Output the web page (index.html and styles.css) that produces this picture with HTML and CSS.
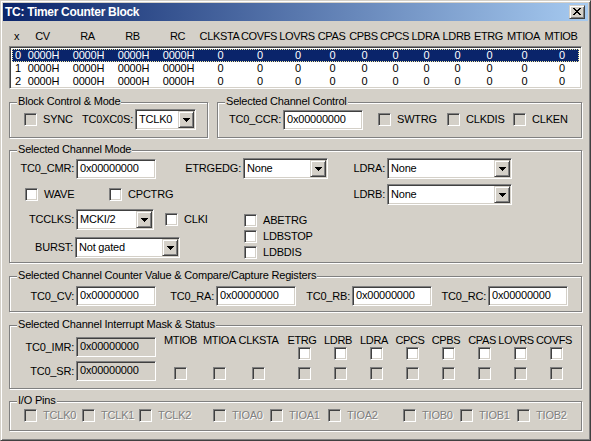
FILE: index.html
```html
<!DOCTYPE html>
<html lang="en">
<head>
    <meta charset="UTF-8">
    <title>TC: Timer Counter Block</title>
    <link rel="stylesheet" href="styles.css">
</head>
<body>
<div class="window">
    <div class="titlebar">
        <span class="title">TC: Timer Counter Block</span>
        <span class="close-btn raised">
            <svg width="8" height="7" viewBox="0 0 8 7" shape-rendering="crispEdges"><path d="M0 0h2v1H0zM6 0h2v1H6zM1 1h2v1H1zM5 1h2v1H5zM2 2h4v1H2zM3 3h2v1H3zM2 4h4v1H2zM1 5h2v1H1zM5 5h2v1H5zM0 6h2v1H0zM6 6h2v1H6z"/></svg>
        </span>
    </div>

    <div class="client">
        <!-- channel list -->
        <div class="list-head cols">
            <span>x</span><span>CV</span><span>RA</span><span>RB</span><span>RC</span>
            <span>CLKSTA</span><span>COVFS</span><span>LOVRS</span><span>CPAS</span><span>CPBS</span>
            <span>CPCS</span><span>LDRA</span><span>LDRB</span><span>ETRG</span><span>MTIOA</span><span>MTIOB</span>
        </div>
        <div class="listbox sunken">
            <div class="list-row cols selected">
                <span>0</span><span>0000H</span><span>0000H</span><span>0000H</span><span>0000H</span>
                <span>0</span><span>0</span><span>0</span><span>0</span><span>0</span>
                <span>0</span><span>0</span><span>0</span><span>0</span><span>0</span><span>0</span>
            </div>
            <div class="list-row cols">
                <span>1</span><span>0000H</span><span>0000H</span><span>0000H</span><span>0000H</span>
                <span>0</span><span>0</span><span>0</span><span>0</span><span>0</span>
                <span>0</span><span>0</span><span>0</span><span>0</span><span>0</span><span>0</span>
            </div>
            <div class="list-row cols">
                <span>2</span><span>0000H</span><span>0000H</span><span>0000H</span><span>0000H</span>
                <span>0</span><span>0</span><span>0</span><span>0</span><span>0</span>
                <span>0</span><span>0</span><span>0</span><span>0</span><span>0</span><span>0</span>
            </div>
        </div>

        <!-- block control + channel control -->
        <div class="group-row">
            <div class="group grp-block">
                <div class="group-title">Block Control &amp; Mode</div>
                <div class="row block-row">
                    <label class="check w-sync"><span class="box gray"></span>SYNC</label>
                    <span class="lbl w-xc0s">TC0XC0S:</span>
                    <div class="combo sunken w-tclk">
                        <span class="combo-text">TCLK0</span>
                        <span class="combo-btn raised"><svg width="7" height="4" shape-rendering="crispEdges"><path d="M0 0h7v1H0zM1 1h5v1H1zM2 2h3v1H2zM3 3h1v1H3z"/></svg></span>
                    </div>
                </div>
            </div>
            <div class="group grp-ccr">
                <div class="group-title">Selected Channel Control</div>
                <div class="row ccr-row">
                    <span class="lbl w-ccr">TC0_CCR:</span>
                    <div class="edit sunken">0x00000000</div>
                    <label class="check w-swtrg"><span class="box gray"></span>SWTRG</label>
                    <label class="check w-clkdis"><span class="box gray"></span>CLKDIS</label>
                    <label class="check"><span class="box gray"></span>CLKEN</label>
                </div>
            </div>
        </div>

        <!-- channel mode -->
        <div class="group grp-mode">
            <div class="group-title">Selected Channel Mode</div>
            <div class="row mode-a">
                <span class="lbl w-64">TC0_CMR:</span>
                <div class="edit sunken">0x00000000</div>
                <span class="lbl w-etrg">ETRGEDG:</span>
                <div class="combo sunken w-85">
                    <span class="combo-text">None</span>
                    <span class="combo-btn raised"><svg width="7" height="4" shape-rendering="crispEdges"><path d="M0 0h7v1H0zM1 1h5v1H1zM2 2h3v1H2zM3 3h1v1H3z"/></svg></span>
                </div>
                <span class="lbl w-ldr">LDRA:</span>
                <div class="combo sunken w-125">
                    <span class="combo-text">None</span>
                    <span class="combo-btn raised"><svg width="7" height="4" shape-rendering="crispEdges"><path d="M0 0h7v1H0zM1 1h5v1H1zM2 2h3v1H2zM3 3h1v1H3z"/></svg></span>
                </div>
            </div>
            <div class="row mode-b">
                <label class="check w-wave"><span class="box"></span>WAVE</label>
                <label class="check w-cpctrg"><span class="box"></span>CPCTRG</label>
                <span class="lbl w-ldr">LDRB:</span>
                <div class="combo sunken w-125">
                    <span class="combo-text">None</span>
                    <span class="combo-btn raised"><svg width="7" height="4" shape-rendering="crispEdges"><path d="M0 0h7v1H0zM1 1h5v1H1zM2 2h3v1H2zM3 3h1v1H3z"/></svg></span>
                </div>
            </div>
            <div class="mode-lower">
                <div class="mode-left">
                    <div class="row">
                        <span class="lbl w-64">TCCLKS:</span>
                        <div class="combo sunken w-78">
                            <span class="combo-text">MCKI/2</span>
                            <span class="combo-btn raised"><svg width="7" height="4" shape-rendering="crispEdges"><path d="M0 0h7v1H0zM1 1h5v1H1zM2 2h3v1H2zM3 3h1v1H3z"/></svg></span>
                        </div>
                        <label class="check clki"><span class="box"></span>CLKI</label>
                    </div>
                    <div class="row burst-row">
                        <span class="lbl w-63">BURST:</span>
                        <div class="combo sunken w-105">
                            <span class="combo-text">Not gated</span>
                            <span class="combo-btn raised"><svg width="7" height="4" shape-rendering="crispEdges"><path d="M0 0h7v1H0zM1 1h5v1H1zM2 2h3v1H2zM3 3h1v1H3z"/></svg></span>
                        </div>
                    </div>
                </div>
                <div class="check-col">
                    <label class="check"><span class="box"></span>ABETRG</label>
                    <label class="check"><span class="box"></span>LDBSTOP</label>
                    <label class="check"><span class="box"></span>LDBDIS</label>
                </div>
            </div>
        </div>

        <!-- counter value and RA/RB/RC -->
        <div class="group grp-regs">
            <div class="group-title">Selected Channel Counter Value &amp; Compare/Capture Registers</div>
            <div class="row regs-row">
                <span class="lbl w-64">TC0_CV:</span>
                <div class="edit sunken">0x00000000</div>
                <span class="lbl w-58">TC0_RA:</span>
                <div class="edit sunken">0x00000000</div>
                <span class="lbl w-54">TC0_RB:</span>
                <div class="edit sunken">0x00000000</div>
                <span class="lbl w-54">TC0_RC:</span>
                <div class="edit sunken">0x00000000</div>
            </div>
        </div>

        <!-- interrupt mask and status -->
        <div class="group grp-irq">
            <div class="group-title">Selected Channel Interrupt Mask &amp; Status</div>
            <div class="irq-body">
                <div class="irq-regs">
                    <div class="row">
                        <span class="lbl w-64">TC0_IMR:</span>
                        <div class="edit sunken readonly">0x00000000</div>
                    </div>
                    <div class="row">
                        <span class="lbl w-64">TC0_SR:</span>
                        <div class="edit sunken readonly">0x00000000</div>
                    </div>
                </div>
                <div class="irq-grid irq-a">
                    <span class="hd">MTIOB</span><span class="hd">MTIOA</span><span class="hd">CLKSTA</span>
                    <span></span><span></span><span></span>
                    <span class="cell"><span class="box gray"></span></span>
                    <span class="cell"><span class="box gray"></span></span>
                    <span class="cell"><span class="box gray"></span></span>
                </div>
                <div class="irq-grid irq-b">
                    <span class="hd">ETRG</span><span class="hd">LDRB</span><span class="hd">LDRA</span><span class="hd">CPCS</span>
                    <span class="hd">CPBS</span><span class="hd">CPAS</span><span class="hd hd-lovrs">LOVRS</span><span class="hd">COVFS</span>
                    <span class="cell"><span class="box"></span></span><span class="cell"><span class="box"></span></span>
                    <span class="cell"><span class="box"></span></span><span class="cell"><span class="box"></span></span>
                    <span class="cell"><span class="box"></span></span><span class="cell"><span class="box"></span></span>
                    <span class="cell"><span class="box"></span></span><span class="cell"><span class="box"></span></span>
                    <span class="cell"><span class="box gray"></span></span><span class="cell"><span class="box gray"></span></span>
                    <span class="cell"><span class="box gray"></span></span><span class="cell"><span class="box gray"></span></span>
                    <span class="cell"><span class="box gray"></span></span><span class="cell"><span class="box gray"></span></span>
                    <span class="cell"><span class="box gray"></span></span><span class="cell"><span class="box gray"></span></span>
                </div>
            </div>
        </div>

        <!-- pins -->
        <div class="group grp-pins">
            <div class="group-title">I/O Pins</div>
            <div class="row pins-row">
                <label class="check disabled pin-a"><span class="box gray"></span>TCLK0</label>
                <label class="check disabled pin-b"><span class="box gray"></span>TCLK1</label>
                <label class="check disabled pin-end"><span class="box gray"></span>TCLK2</label>
                <label class="check disabled pin-b"><span class="box gray"></span>TIOA0</label>
                <label class="check disabled pin-a"><span class="box gray"></span>TIOA1</label>
                <label class="check disabled pin-end2"><span class="box gray"></span>TIOA2</label>
                <label class="check disabled pin-b"><span class="box gray"></span>TIOB0</label>
                <label class="check disabled pin-b"><span class="box gray"></span>TIOB1</label>
                <label class="check disabled"><span class="box gray"></span>TIOB2</label>
            </div>
        </div>
    </div>
</div>
</body>
</html>
```

FILE: styles.css
```css
* {
    box-sizing: border-box;
}

body {
    margin: 0;
    background-color: #d4d0c8;
    font-family: "Liberation Sans", Arial, sans-serif;
    font-size: 11px;
    line-height: 13px;
    letter-spacing: -0.2px;
    color: #000;
}

/* classic 3d edges */
.raised {
    border: 1px solid;
    border-color: #d4d0c8 #404040 #404040 #d4d0c8;
    box-shadow: inset 1px 1px #fff, inset -1px -1px #808080;
    background-color: #d4d0c8;
}

.sunken {
    border: 1px solid;
    border-color: #808080 #fff #fff #808080;
    box-shadow: inset 1px 1px #404040, inset -1px -1px #d4d0c8;
    padding: 1px;
    background-color: #fff;
}

.window {
    width: 591px;
    height: 441px;
    background-color: #d4d0c8;
    border: 1px solid;
    border-color: #d4d0c8 #404040 #404040 #d4d0c8;
    box-shadow: inset 1px 1px #fff, inset -1px -1px #808080;
    padding: 2px;
    display: flex;
    flex-direction: column;
}

.titlebar {
    height: 18px;
    flex: none;
    display: flex;
    align-items: center;
    justify-content: space-between;
    padding: 0 3px 0 2px;
    background: linear-gradient(to right, #0a246a, #a6caf0);
}

.title {
    color: #fff;
    font-weight: bold;
    font-size: 12px;
    letter-spacing: -0.3px;
    line-height: 18px;
}

.close-btn {
    width: 16px;
    height: 14px;
    display: flex;
    align-items: center;
    justify-content: center;
    padding-bottom: 1px;
}

.close-btn svg {
    display: block;
}

.client {
    flex: 1;
    padding: 9px 6px 0 6px;
}

/* list of channels */
.cols {
    display: grid;
    grid-template-columns: 9px 45px 45px 45px 45px 39px 40px 36px 33px 31px 31px 31px 31px 33px 37px 38px;
    height: 13px;
}

.cols span {
    display: flex;
    justify-content: center;
    white-space: nowrap;
}

.cols span:first-child {
    justify-content: flex-start;
    padding-left: 3px;
}

.list-head {
    padding: 0 2px;
    letter-spacing: -0.35px;
}

.listbox {
    margin-top: 3px;
    height: 43px;
    padding: 2px 2px;
}

.list-row.selected {
    background-color: #0a246a;
    color: #fff;
    outline: 1px dotted #f0e8a0;
    outline-offset: -1px;
}

/* group boxes */
.group {
    border: 1px solid #808080;
    box-shadow: inset 1px 1px #fff, 1px 1px #fff;
}

.group-title {
    display: block;
    width: max-content;
    height: 13px;
    margin: -8px 0 0 7px;
    padding: 0 1px;
    background-color: #d4d0c8;
}

.group-row {
    display: flex;
    gap: 9px;
    margin-top: 13px;
}

.grp-block {
    width: 199px;
    height: 36px;
}

.grp-ccr {
    width: 365px;
    height: 36px;
}

.grp-mode {
    margin-top: 12px;
    height: 113px;
}

.grp-regs {
    margin-top: 13px;
    height: 36px;
}

.grp-irq {
    margin-top: 13px;
    height: 64px;
}

.grp-pins {
    margin-top: 12px;
    height: 30px;
}

.row {
    display: flex;
    align-items: center;
    height: 21px;
}

.lbl {
    flex: none;
    text-align: right;
    white-space: nowrap;
    margin-right: 2px;
}

/* controls */
.edit {
    flex: none;
    width: 80px;
    height: 20px;
    padding: 2px 2px 0 3px;
    white-space: nowrap;
}

.edit.readonly {
    background-color: #d4d0c8;
}

.combo {
    flex: none;
    display: flex;
    height: 21px;
}

.combo-text {
    flex: 1;
    padding: 2px 0 0 2px;
    white-space: nowrap;
}

.combo-btn {
    flex: none;
    width: 16px;
    height: 17px;
    display: flex;
    align-items: center;
    justify-content: center;
}

.combo-btn svg {
    display: block;
}

.check {
    flex: none;
    display: flex;
    align-items: center;
    height: 13px;
    white-space: nowrap;
}

.box {
    flex: none;
    width: 13px;
    height: 13px;
    margin-right: 6px;
    border: 1px solid;
    border-color: #808080 #fff #fff #808080;
    box-shadow: inset 1px 1px #404040, inset -1px -1px #d4d0c8;
    background-color: #fff;
}

.box.gray {
    background-color: #d4d0c8;
}

.check.disabled {
    color: #808080;
    text-shadow: 1px 1px 0 #fff;
}

/* block control & mode */
.block-row {
    margin: 1px 0 0 14px;
}

.w-sync { width: 58px; }
.w-xc0s { width: 51px; }
.w-tclk { width: 61px; }

/* channel control */
.ccr-row {
    margin: 1px 0 0 11px;
}

.w-ccr { width: 52px; }

.w-swtrg {
    width: 69px;
    margin-left: 15px;
}

.w-clkdis { width: 66px; }

/* channel mode */
.mode-a {
    margin-top: 2px;
}

.mode-b {
    margin: 5px 0 0 15px;
}

.w-64 { width: 64px; }
.w-63 { width: 63px; }
.w-58 { width: 58px; }
.w-54 { width: 54px; }
.w-etrg { width: 85px; }
.w-ldr { width: 57px; }
.w-85 { width: 85px; }
.w-125 { width: 125px; }
.w-78 { width: 78px; }
.w-105 { width: 105px; }
.w-wave { width: 84px; }
.w-cpctrg { width: 219px; }

.mode-lower {
    display: flex;
    margin-top: 4px;
}

.mode-left {
    width: 234px;
}

.burst-row {
    margin-top: 7px;
}

.clki {
    margin-left: 11px;
}

.check-col {
    display: flex;
    flex-direction: column;
    gap: 3px;
    margin-top: 5px;
}

/* registers */
.regs-row {
    margin-top: 4px;
    height: 20px;
}

/* interrupt mask & status */
.irq-body {
    display: flex;
}

.irq-regs {
    width: 151px;
    margin-top: 6px;
    display: flex;
    flex-direction: column;
    gap: 4px;
}

.irq-regs .row {
    height: 20px;
}

.irq-grid {
    display: grid;
    grid-template-rows: 13px 20px 13px;
    margin-top: 3px;
}

.irq-a {
    grid-template-columns: repeat(3, 39px);
}

.irq-b {
    grid-template-columns: repeat(8, 36px);
    margin-left: 8px;
}

.irq-grid .hd {
    display: flex;
    justify-content: center;
    white-space: nowrap;
    letter-spacing: -0.35px;
}

.irq-b .hd {
    padding-right: 4px;
}

.irq-b .hd-lovrs {
    padding-right: 8px;
}

.irq-grid .cell {
    display: flex;
    justify-content: center;
    align-items: flex-start;
}

.irq-grid .cell .box {
    margin-right: 0;
}

/* pins */
.pins-row {
    margin: 2px 0 0 14px;
    height: 13px;
}

.pin-a { width: 58px; }
.pin-b { width: 57px; }
.pin-end { width: 74px; }
.pin-end2 { width: 75px; }
```
